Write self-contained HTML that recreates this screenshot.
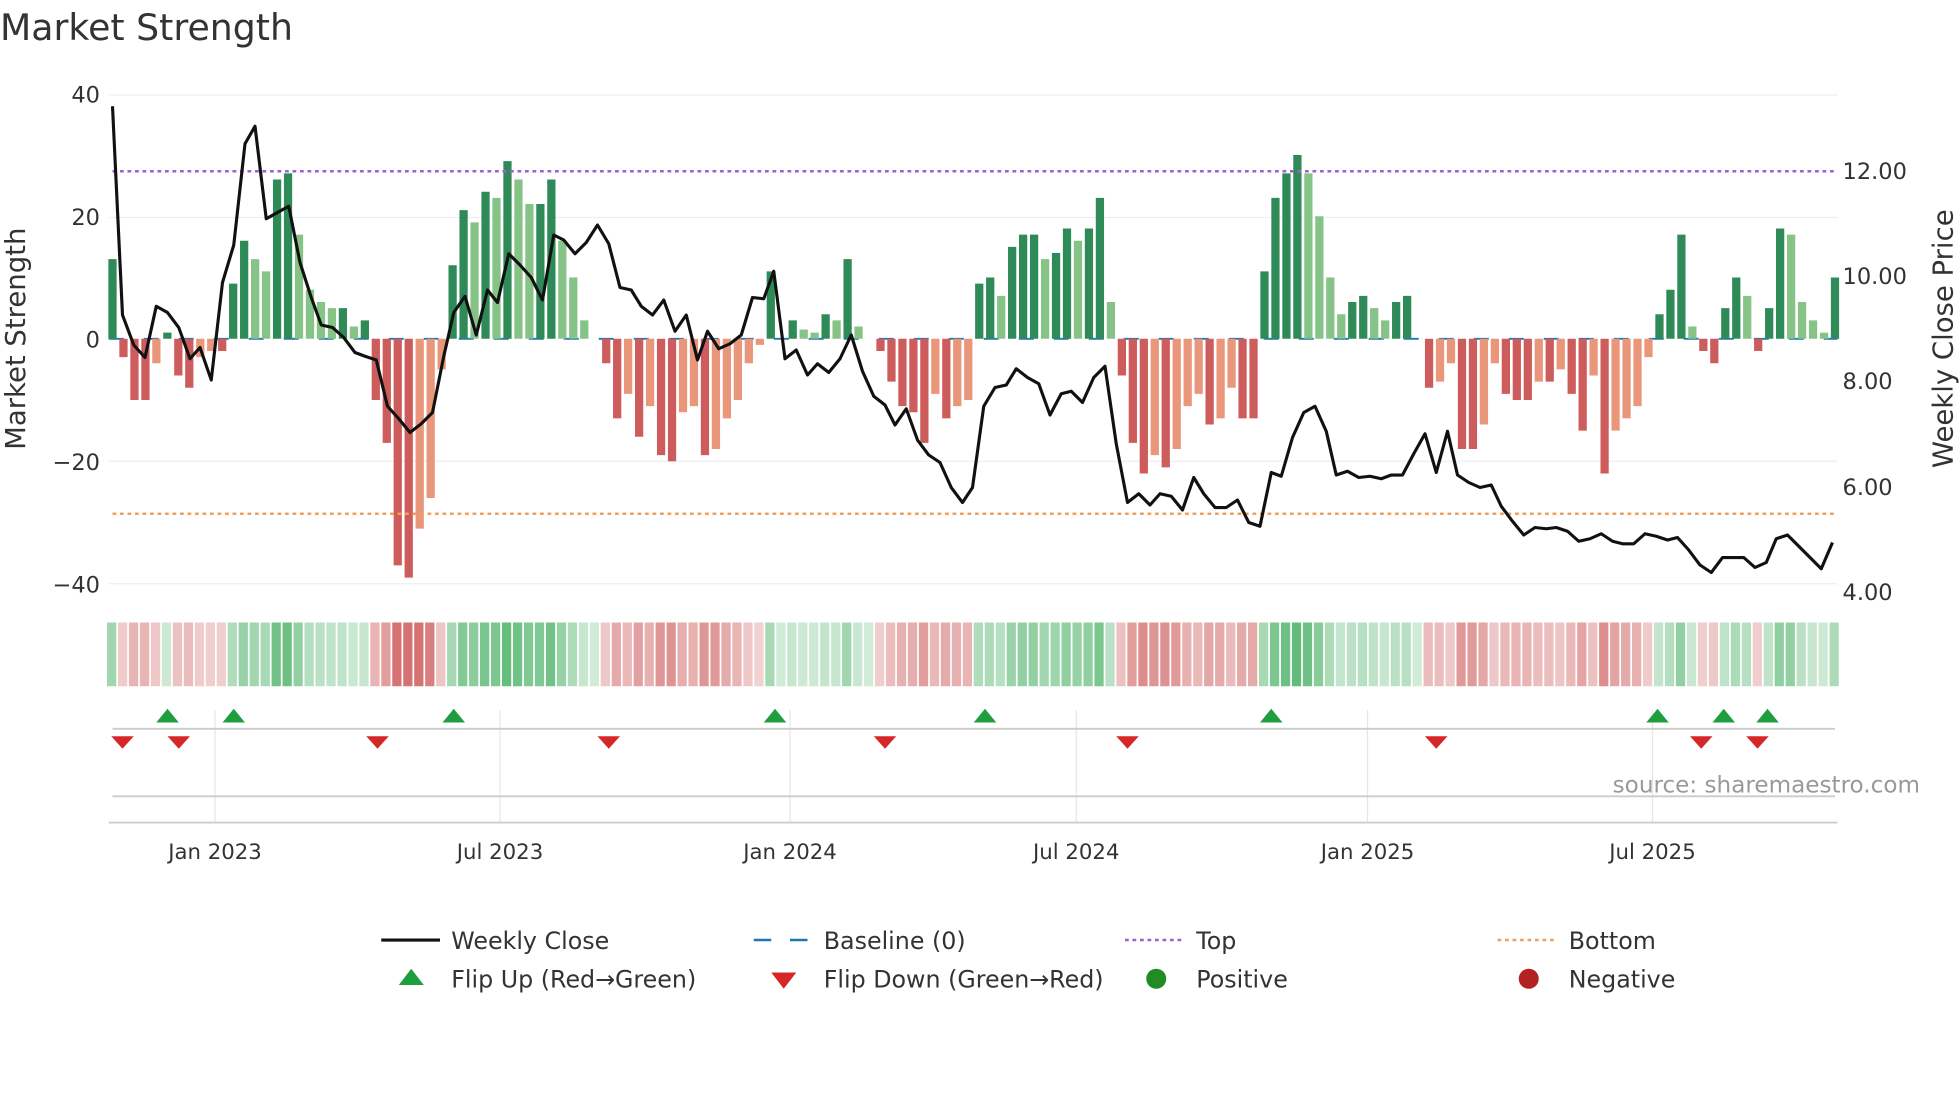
<!DOCTYPE html>
<html><head><meta charset="utf-8"><style>
html,body{margin:0;padding:0;background:#fff;width:1960px;height:1102px;overflow:hidden}
svg{display:block;font-family:"DejaVu Sans","Liberation Sans",sans-serif}
</style></head><body>
<svg id="s" width="1960" height="1102" viewBox="0 0 1568 881.6" xmlns="http://www.w3.org/2000/svg">
<text x="0" y="32" font-size="29" fill="#333">Market Strength</text>
<g stroke="#eceff2" stroke-width="1">
<line x1="87" y1="76" x2="1470" y2="76"/><line x1="87" y1="174" x2="1470" y2="174"/>
<line x1="87" y1="369" x2="1470" y2="369"/><line x1="87" y1="467" x2="1470" y2="467"/>
</g>
<g font-size="18" fill="#333">
<text x="80" y="82" text-anchor="end">40</text><text x="80" y="180" text-anchor="end">20</text>
<text x="80" y="278" text-anchor="end">0</text><text x="80" y="376" text-anchor="end">−20</text>
<text x="80" y="474" text-anchor="end">−40</text>
<text x="1474" y="143">12.00</text><text x="1474" y="227">10.00</text><text x="1474" y="311">8.00</text>
<text x="1474" y="396">6.00</text><text x="1474" y="480">4.00</text>
</g>
<text transform="translate(20,271) rotate(-90)" font-size="22" fill="#333" text-anchor="middle">Market Strength</text>
<text transform="translate(1562,271) rotate(-90)" font-size="22" fill="#333" text-anchor="middle">Weekly Close Price</text>
<line x1="87" y1="271" x2="1470" y2="271" stroke="#1f77b4" stroke-width="1.5" stroke-dasharray="12,16"/>
<g id="bars"></g>
<line x1="90" y1="137" x2="1470" y2="137" stroke="#9d5fd6" stroke-width="2" stroke-dasharray="3,3"/>
<line x1="90" y1="411" x2="1470" y2="411" stroke="#f0a05a" stroke-width="2" stroke-dasharray="3,3"/>
<polyline id="price" fill="none" stroke="#111" stroke-width="2.5" stroke-linejoin="round"/>
<g id="heat"></g>
<g stroke="#e6e6e6"><line x1="172" y1="568" x2="172" y2="658"/><line x1="400" y1="568" x2="400" y2="658"/><line x1="632" y1="568" x2="632" y2="658"/><line x1="861" y1="568" x2="861" y2="658"/><line x1="1094" y1="568" x2="1094" y2="658"/><line x1="1322" y1="568" x2="1322" y2="658"/></g>
<line x1="90" y1="583" x2="1468" y2="583" stroke="#ccc" stroke-width="1.5"/>
<line x1="90" y1="637" x2="1468" y2="637" stroke="#ccc" stroke-width="1.5"/>
<line x1="87" y1="658" x2="1470" y2="658" stroke="#ccc" stroke-width="1.5"/>
<g id="mk"></g>
<text x="1536" y="634" font-size="18.5" fill="#999" text-anchor="end">source: sharemaestro.com</text>
<g font-size="17" fill="#333" text-anchor="middle">
<text x="172" y="687">Jan 2023</text><text x="400" y="687">Jul 2023</text><text x="632" y="687">Jan 2024</text>
<text x="861" y="687">Jul 2024</text><text x="1094" y="687">Jan 2025</text><text x="1322" y="687">Jul 2025</text>
</g>
<g font-size="19" fill="#333">
<line x1="305" y1="752" x2="352" y2="752" stroke="#111" stroke-width="2.5"/><text x="361" y="759">Weekly Close</text>
<line x1="603" y1="752" x2="617" y2="752" stroke="#1f77b4" stroke-width="2"/><line x1="632" y1="752" x2="646" y2="752" stroke="#1f77b4" stroke-width="2"/><text x="659" y="759">Baseline (0)</text>
<line x1="900" y1="752" x2="946" y2="752" stroke="#9d5fd6" stroke-width="2" stroke-dasharray="3,3"/><text x="957" y="759">Top</text>
<line x1="1198" y1="752" x2="1244" y2="752" stroke="#f0a05a" stroke-width="2" stroke-dasharray="3,3"/><text x="1255" y="759">Bottom</text>
<polygon points="319,788 329,775 339,788" fill="#1f9e3f"/><text x="361" y="790">Flip Up (Red→Green)</text>
<polygon points="617,778 637,778 627,791" fill="#d62728"/><text x="659" y="790">Flip Down (Green→Red)</text>
<circle cx="925" cy="783" r="8" fill="#228b22"/><text x="957" y="790">Positive</text>
<circle cx="1223" cy="783" r="8" fill="#b22222"/><text x="1255" y="790">Negative</text>
</g>
</svg>
<script>
(function(){
var v=[13,-3,-10,-10,-4,1,-6,-8,-3,-2,-2,9,16,13,11,26,27,17,8,6,5,5,2,3,-10,-17,-37,-39,-31,-26,-5,12,21,19,24,23,29,26,22,22,26,16,10,3,0,-4,-13,-9,-16,-11,-19,-20,-12,-11,-19,-18,-13,-10,-4,-1,11,0,3,1.5,1,4,3,13,2,0,-2,-7,-11,-12,-17,-9,-13,-11,-10,9,10,7,15,17,17,13,14,18,16,18,23,6,-6,-17,-22,-19,-21,-18,-11,-9,-14,-13,-8,-13,-13,11,23,27,30,27,20,10,4,6,7,5,3,6,7,0,-8,-7,-4,-18,-18,-14,-4,-9,-10,-10,-7,-7,-5,-9,-15,-6,-22,-15,-13,-11,-3,4,8,17,2,-2,-4,5,10,7,-2,5,18,17,6,3,1,10];
var NS="http://www.w3.org/2000/svg",b=document.getElementById('bars'),h=document.getElementById('heat');
var n=v.length,step=(1468-90)/(n-1);
function el(t,a,p){var e=document.createElementNS(NS,t);for(var k in a)e.setAttribute(k,a[k]);p.appendChild(e);return e;}
for(var i=0;i<n;i++){var x=90+i*step,y=v[i],p=i?v[i-1]:0,c;
 if(y>=0)c=(y>=p)?'#2e8b57':'#86c386';else c=(y<=p)?'#cd5c5c':'#e9967a';
 var yt=271-Math.max(y,0)*4.9,hh=Math.abs(y)*4.9;
 if(hh>0.5)el('rect',{x:x-3.3,y:yt,width:6.6,height:hh,fill:c},b);
 var op=0.3+Math.min(Math.abs(y)/30,1)*0.7;
 el('rect',{x:x-4.4,y:498,width:7.4,height:51,fill:y>=0?'#3cab5a':'#c9504f','fill-opacity':op*0.8},h);}
var pts="90,85 98,252 107,276 116,286 125,245 134,250 143,262 152,287 160,278 169,304 178,226 187,196 196,115 204,101 213,175 222,170 231,165 240,210 249,238 257,260 266,262 275,270 284,282 292,285 301,288 310,325 319,335 328,346 337,339 346,330 355,285 363,250 372,237 381,268 390,232 398,242 407,203 416,212 425,222 434,240 443,188 451,192 460,203 469,194 478,180 487,195 496,230 505,232 513,245 522,252 531,240 540,265 549,252 558,288 566,265 575,279 584,275 593,268 602,238 611,239 619,217 628,287 637,280 646,300 654,291 663,298 672,287 681,268 690,297 699,317 708,324 716,340 725,327 734,352 743,364 752,370 761,390 770,402 778,390 787,325 796,310 805,308 813,295 822,302 831,307 840,332 849,315 857,313 866,322 875,302 884,293 893,355 902,402 911,395 920,404 928,395 937,397 946,408 955,382 963,395 972,406 981,406 990,400 999,418 1008,421 1017,378 1025,381 1034,350 1043,330 1052,325 1061,345 1069,380 1078,377 1087,382 1096,381 1105,383 1113,380 1122,380 1131,363 1140,347 1149,378 1158,345 1166,380 1175,386 1184,390 1193,388 1201,405 1210,417 1219,428 1228,422 1237,423 1245,422 1254,425 1263,433 1272,431 1281,427 1290,433 1298,435 1307,435 1316,427 1325,429 1334,432 1342,430 1351,440 1360,452 1369,458 1378,446 1386,446 1395,446 1404,454 1413,450 1421,431 1430,428 1439,437 1448,446 1457,455 1466,434";
document.getElementById('price').setAttribute('points',pts);
var mk=document.getElementById('mk');
[134,187,363,620,788,1017,1326,1379,1414].forEach(function(x){el('polygon',{points:(x-9)+',578 '+x+',567 '+(x+9)+',578',fill:'#1f9e3f'},mk);});
[98,143,302,487,708,902,1149,1361,1406].forEach(function(x){el('polygon',{points:(x-9)+',589 '+(x+9)+',589 '+x+',599',fill:'#d62728'},mk);});
})();
</script>
</body></html>
